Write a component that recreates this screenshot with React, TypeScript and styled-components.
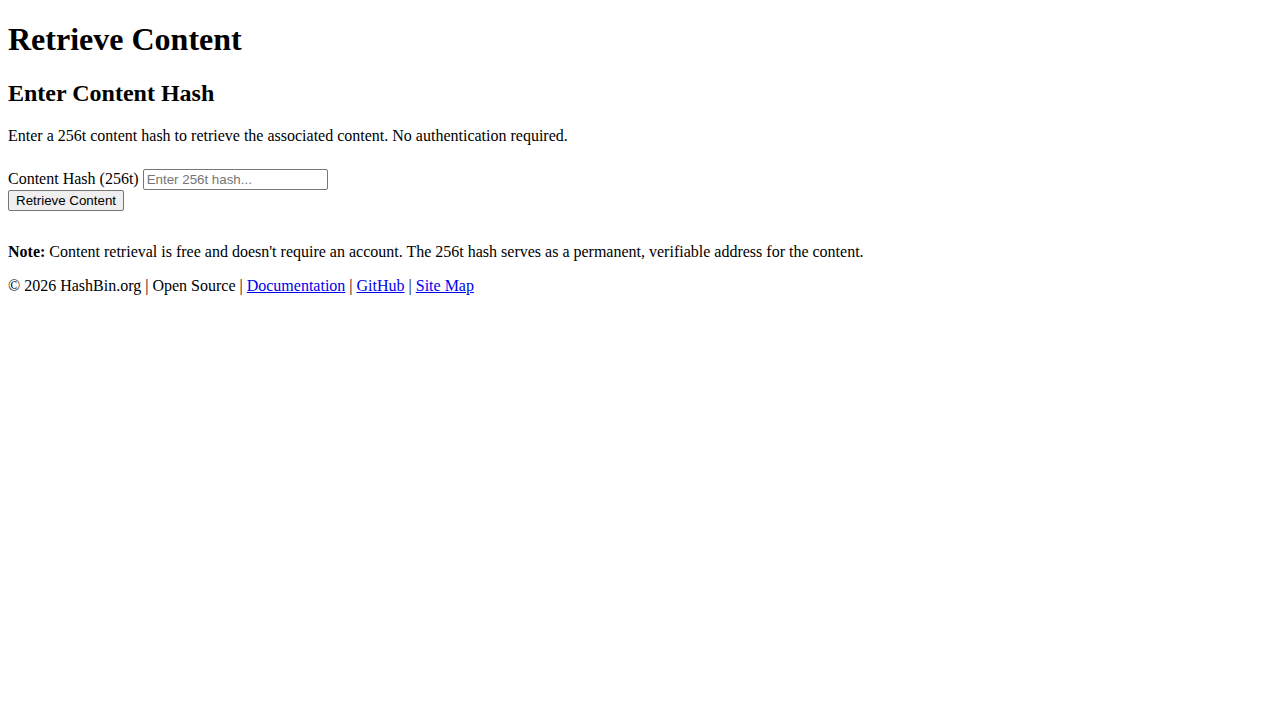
import React, { useState } from "react";
import styled, { createGlobalStyle } from "styled-components";

// Global
const GlobalStyle = createGlobalStyle`
  body {
    margin: 0;
    background: #fff;
    color: #000;
    font-family: "Liberation Serif", "Times New Roman", serif;
    font-size: 16px;
  }
`;

// Styled Components
const Page = styled.main`
  padding: 0 8px 8px;
`;
const Title = styled.h1`
  font-size: 32px;
  font-weight: bold;
  margin: 21.44px 0;
`;
const SubTitle = styled.h2`
  font-size: 24px;
  font-weight: bold;
  margin: 19.92px 0;
`;
const Text = styled.p`
  margin: 16px 0;
`;
const HashForm = styled.form`
  margin: 24px 0 32px;
`;
const FieldLabel = styled.label`
  font-size: 16px;
`;
const HashInput = styled.input`
  font-family: "Liberation Sans", Arial, sans-serif;
  font-size: 13.33px;
  padding: 2px 3px;
  border: 1px solid #767676;
  border-radius: 2px;
  width: 177px;
  height: 15px;
  margin: 0;
  box-sizing: content-box;
  color: #000;

  &::placeholder {
    color: #757575;
  }
`;
const SubmitButton = styled.button`
  font-family: "Liberation Sans", Arial, sans-serif;
  font-size: 13.33px;
  padding: 2px 7px;
  margin: 0;
  border: 1px solid #767676;
  border-radius: 2px;
  background: #efefef;
  color: #000;
`;
const Link = styled.a`
  color: #0000ee;
  text-decoration: underline;
`;

export default function App(): JSX.Element {
  const [hash, setHash] = useState<string>("");

  const handleSubmit = (e: React.FormEvent): void => {
    e.preventDefault();
  };

  return (
    <Page>
      <GlobalStyle />
      <Title>Retrieve Content</Title>
      <SubTitle>Enter Content Hash</SubTitle>
      <Text>
        Enter a 256t content hash to retrieve the associated content. No authentication required.
      </Text>
      <HashForm onSubmit={handleSubmit}>
        <FieldLabel htmlFor="hash-input">Content Hash (256t)</FieldLabel>{" "}
        <HashInput
          id="hash-input"
          type="text"
          value={hash}
          onChange={(e) => setHash(e.target.value)}
          placeholder="Enter 256t hash..."
        />
        <br />
        <SubmitButton type="submit">Retrieve Content</SubmitButton>
      </HashForm>
      <Text>
        <strong>Note:</strong> Content retrieval is free and doesn't require an account. The 256t hash serves as a permanent, verifiable address for the content.
      </Text>
      <Text>
        © 2026 HashBin.org | Open Source | <Link href="#">Documentation</Link> |{" "}
        <Link href="#">GitHub</Link> | <Link href="#">Site Map</Link>
      </Text>
    </Page>
  );
}
